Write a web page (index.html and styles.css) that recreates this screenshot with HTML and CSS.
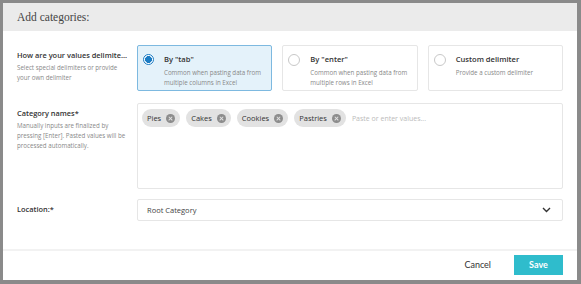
FILE: index.html
```html
<!DOCTYPE html>
<html lang="en">
<head>
  <meta charset="UTF-8">
  <title>Add categories</title>
  <link rel="stylesheet" href="styles.css">
</head>
<body>
  <div class="modal">
    <div class="modal-header">
      <h1>Add categories:</h1>
    </div>

    <div class="modal-body">
      <div class="row">
        <div class="label">
          <div class="label-title">How are your values delimite...</div>
          <div class="label-desc">Select special delimiters or provide your own delimiter</div>
        </div>
        <div class="options">
          <div class="option selected">
            <span class="radio"></span>
            <div>
              <div class="option-title">By "tab"</div>
              <div class="option-desc">Common when pasting data from multiple columns in Excel</div>
            </div>
          </div>
          <div class="option">
            <span class="radio"></span>
            <div>
              <div class="option-title">By "enter"</div>
              <div class="option-desc">Common when pasting data from multiple rows in Excel</div>
            </div>
          </div>
          <div class="option">
            <span class="radio"></span>
            <div>
              <div class="option-title">Custom delimiter</div>
              <div class="option-desc">Provide a custom delimiter</div>
            </div>
          </div>
        </div>
      </div>

      <div class="row row-names">
        <div class="label">
          <div class="label-title">Category names*</div>
          <div class="label-desc">Manually inputs are finalized by pressing [Enter]. Pasted values will be processed automatically.</div>
        </div>
        <div class="tag-box">
          <span class="tag">Pies <span class="tag-x"></span></span>
          <span class="tag">Cakes <span class="tag-x"></span></span>
          <span class="tag">Cookies <span class="tag-x"></span></span>
          <span class="tag">Pastries <span class="tag-x"></span></span>
          <span class="placeholder">Paste or enter values...</span>
        </div>
      </div>

      <div class="row row-location">
        <div class="label">
          <div class="label-title">Location:*</div>
        </div>
        <div class="select">
          <span>Root Category</span>
          <svg width="9" height="6" viewBox="0 0 9 6"><path d="M1 1 L4.5 4.5 L8 1" fill="none" stroke="#333" stroke-width="1.4"/></svg>
        </div>
      </div>
    </div>

    <div class="modal-footer">
      <a class="btn-cancel">Cancel</a>
      <a class="btn-save">Save</a>
    </div>
  </div>
</body>
</html>
```

FILE: styles.css
```css
body {
  margin: 0;
  background: #8a8a8a;
  padding: 3px 4px 4px 3px;
  font-family: 'Open Sans', sans-serif;
  color: #333;
}
.modal {
  width: 574px;
  height: 277px;
  background: #fff;
  display: flex;
  flex-direction: column;
}
.modal-header {
  height: 28px;
  background: #ebebeb;
  padding: 0 14px;
  display: flex;
  align-items: center;
}
.modal-header h1 {
  margin: 0;
  font-family: 'Liberation Serif', serif;
  font-weight: normal;
  font-size: 11.5px;
  color: #444;
}
.modal-body {
  padding: 14px 14px 0 14px;
  flex: 1;
}
.row {
  display: grid;
  grid-template-columns: 120px 1fr;
}
.row-names {
  margin-top: 12px;
}
.row-location {
  margin-top: 10px;
}
.label-title {
  font-size: 7.4px;
  font-weight: 600;
  color: #333;
  margin-top: 5px;
  white-space: nowrap;
}
.label-desc {
  font-size: 6.2px;
  line-height: 10px;
  color: #888;
  margin-top: 3px;
  padding-right: 10px;
}
.row-location .label-title {
  margin-top: 5px;
}
.options {
  display: grid;
  grid-template-columns: repeat(3, 1fr);
  gap: 10px;
}
.option {
  height: 46px;
  box-sizing: border-box;
  border: 1px solid #e6e6e6;
  border-radius: 2px;
  display: flex;
  padding: 7px 5px;
  gap: 10px;
}
.option.selected {
  background: #e4f2fa;
  border-color: #7db9e0;
}
.radio {
  width: 10px;
  height: 10px;
  border: 1px solid #c8c8c8;
  border-radius: 50%;
  flex: none;
  margin-top: 1px;
  box-sizing: content-box;
}
.selected .radio {
  border: 1.5px solid #1b7cc4;
  width: 9px;
  height: 9px;
  background: radial-gradient(circle, #1b7cc4 0 3.2px, #fff 3.7px);
}
.option-title {
  font-size: 7.6px;
  font-weight: 600;
  color: #333;
  line-height: 12px;
}
.option-desc {
  font-size: 6.2px;
  color: #888;
  line-height: 9.5px;
  margin-top: 3px;
}
.tag-box {
  height: 86px;
  box-sizing: border-box;
  border: 1px solid #e6e6e6;
  border-radius: 2px;
  padding: 5px 4px;
  display: flex;
  flex-wrap: wrap;
  align-content: flex-start;
  align-items: center;
  gap: 6px;
}
.tag {
  height: 18px;
  background: #e2e2e2;
  border-radius: 9px;
  padding: 0 5px 0 5px;
  display: inline-flex;
  align-items: center;
  gap: 5px;
  font-size: 7.5px;
  color: #333;
}
.tag-x {
  width: 9px;
  height: 9px;
  border-radius: 50%;
  background: #8c8c8c;
  position: relative;
}
.tag-x::before, .tag-x::after {
  content: '';
  position: absolute;
  left: 2px;
  top: 4px;
  width: 5px;
  height: 1.2px;
  background: #e2e2e2;
  transform: rotate(45deg);
}
.tag-x::after {
  transform: rotate(-45deg);
}
.placeholder {
  font-size: 7px;
  color: #bbb;
}
.select {
  height: 22px;
  box-sizing: border-box;
  border: 1px solid #e6e6e6;
  border-radius: 2px;
  display: flex;
  align-items: center;
  justify-content: space-between;
  padding: 0 11px 0 9px;
  font-size: 7.5px;
  color: #444;
}
.modal-footer {
  border-top: 2px solid #f2f2f2;
  height: 31px;
  box-sizing: border-box;
  display: flex;
  align-items: center;
  justify-content: flex-end;
  padding: 0 14px 2px 0;
  gap: 23px;
  font-family: 'Lato', sans-serif;
}
.btn-cancel {
  font-size: 9px;
  color: #333;
}
.btn-save {
  width: 49px;
  height: 20px;
  background: #2fbccc;
  color: #fff;
  font-weight: bold;
  font-size: 9px;
  display: flex;
  align-items: center;
  justify-content: center;
}
```
